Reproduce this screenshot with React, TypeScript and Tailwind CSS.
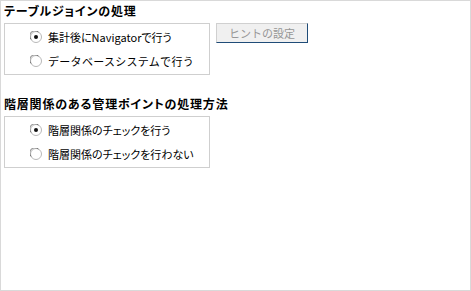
const FONT = "font-['Noto_Sans_CJK_JP','Noto_Sans',sans-serif]";

function Radio({ checked }: { checked: boolean }) {
  return (
    <svg width="12" height="12" viewBox="0 0 12 12" className="shrink-0">
      <circle cx="6" cy="6" r="5.5" fill="#ffffff" stroke="#b8b8b8" strokeWidth="1" />
      <path d="M1.2 8.5 A5 5 0 0 1 8.5 1.2" fill="none" stroke="#7a7a7a" strokeWidth="1" />
      {checked && <circle cx="6" cy="6" r="2" fill="#111111" />}
    </svg>
  );
}

function Option({ label, checked, wide }: { label: string; checked?: boolean; wide?: boolean }) {
  return (
    <div className="flex h-6 items-center gap-[6px]">
      <Radio checked={!!checked} />
      <span
        className={`text-[11px] leading-none text-black ${wide ? "tracking-[0.3px]" : "[font-feature-settings:'palt']"}`}
      >
        {label}
      </span>
    </div>
  );
}

export default function App() {
  return (
    <div className={`h-[291px] w-[471px] border border-[#d9d9d9] bg-white ${FONT}`}>
      <div className="px-[3px] pt-[2px]">
        <h2 className="h-4 text-[12px] font-bold leading-4 tracking-[0.8px] text-black [font-feature-settings:'palt']">
          テーブルジョインの処理
        </h2>
        <div className="mt-[4px] flex items-start gap-[6px]">
          <div className="h-[52px] w-[206px] border border-[#cfcfcf] pl-[25px] pt-[1px]">
            <Option label="集計後にNavigatorで行う" checked />
            <Option label="データベースシステムで行う" wide />
          </div>
          <button
            disabled
            className="h-5 w-[92px] border border-t-[#d0d0d0] border-l-[#d0d0d0] border-b-[#1f4c78] border-r-[#1f4c78] bg-[#f0f0f0] text-[11px] leading-none text-[#969696]"
          >
            ヒントの設定
          </button>
        </div>
        <h2 className="mt-[21px] h-4 text-[12px] font-bold leading-4 tracking-[0.8px] text-black [font-feature-settings:'palt']">
          階層関係のある管理ポイントの処理方法
        </h2>
        <div className="mt-[4px] h-[52px] w-[206px] border border-[#cfcfcf] pl-[25px] pt-[1px]">
          <Option label="階層関係のチェックを行う" checked />
          <Option label="階層関係のチェックを行わない" />
        </div>
      </div>
    </div>
  );
}
